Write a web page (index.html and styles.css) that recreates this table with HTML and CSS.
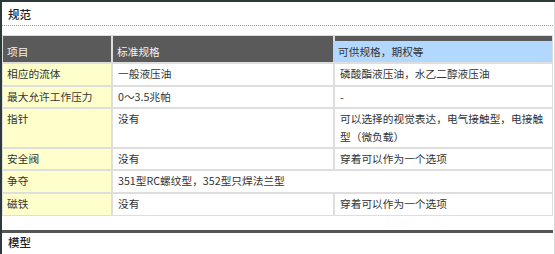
FILE: index.html
```html
<!DOCTYPE html>
<html lang="zh-CN">
<head>
<meta charset="utf-8">
<title>规范</title>
<link rel="stylesheet" href="styles.css">
</head>
<body>
<div class="frame">
  <div class="page">
    <div class="section-title dotted">规范</div>
    <div class="spec">
      <div class="cell head">项目</div>
      <div class="cell head">标准规格</div>
      <div class="cell head head-opt"><div class="opt">可供规格，期权等</div></div>

      <div class="cell key">相应的流体</div>
      <div class="cell">一般液压油</div>
      <div class="cell">磷酸酯液压油，水乙二醇液压油</div>

      <div class="cell key">最大允许工作压力</div>
      <div class="cell">0～3.5兆帕</div>
      <div class="cell">-</div>

      <div class="cell key">指针</div>
      <div class="cell">没有</div>
      <div class="cell">可以选择的视觉表达，电气接触型，电接触<br>型（微负载）</div>

      <div class="cell key">安全阀</div>
      <div class="cell">没有</div>
      <div class="cell">穿着可以作为一个选项</div>

      <div class="cell key">争夺</div>
      <div class="cell span2">351型RC螺纹型，352型只焊法兰型</div>

      <div class="cell key">磁铁</div>
      <div class="cell">没有</div>
      <div class="cell">穿着可以作为一个选项</div>
    </div>
    <div class="rule"></div>
    <div class="section-title bottom">模型</div>
  </div>
</div>
</body>
</html>
```
FILE: styles.css
```css
html, body {
  margin: 0;
  padding: 0;
}
body {
  width: 555px;
  height: 254px;
  overflow: hidden;
  background: #2d3a3a;
  font-family: "Noto Sans CJK SC", "Noto Sans", sans-serif;
  font-size: 10.7px;
  color: #333;
}
.frame {
  padding: 2px 0 0 2px;
  height: 252px;
}
.page {
  background: #fff;
  height: 252px;
  width: 551px;
  border-right: 1px solid #d8d8d8;
  padding-right: 1px;
  overflow: hidden;
}
.section-title {
  height: 23px;
  line-height: 25px;
  padding-left: 6px;
  font-size: 11.5px;
  color: #222;
  font-weight: 500;
}
.section-title.bottom {
  line-height: 19px;
}
.dotted {
  border-bottom: 1px dotted #999;
}
.spec {
  margin-top: 9px;
  display: grid;
  grid-template-columns: 108px 220px 1fr;
  gap: 2px;
  padding: 1px;
  background: #dedede;
}
.cell {
  background: #fff;
  line-height: 17.6px;
  padding: 1px 5px 1px 5px;
  min-height: 18.7px;
}
.key {
  background: #ffffcc;
  padding-left: 4px;
}
.head {
  background: #5a5a5a;
  color: #f2f2f2;
  padding: 7px 5px 1px 4px;
  min-height: 0;
  line-height: 18px;
}
.head-opt {
  padding: 5px 0 0 0;
}
.opt {
  background: #b3d8ff;
  color: #333;
  padding: 2px 5px 1px 4px;
  margin-left: -2px;
  border-left: 1px solid #d0d0d0;
}
.span2 {
  grid-column: span 2;
}
.rule {
  margin-top: 14px;
  height: 3px;
  background: #555;
}
```
